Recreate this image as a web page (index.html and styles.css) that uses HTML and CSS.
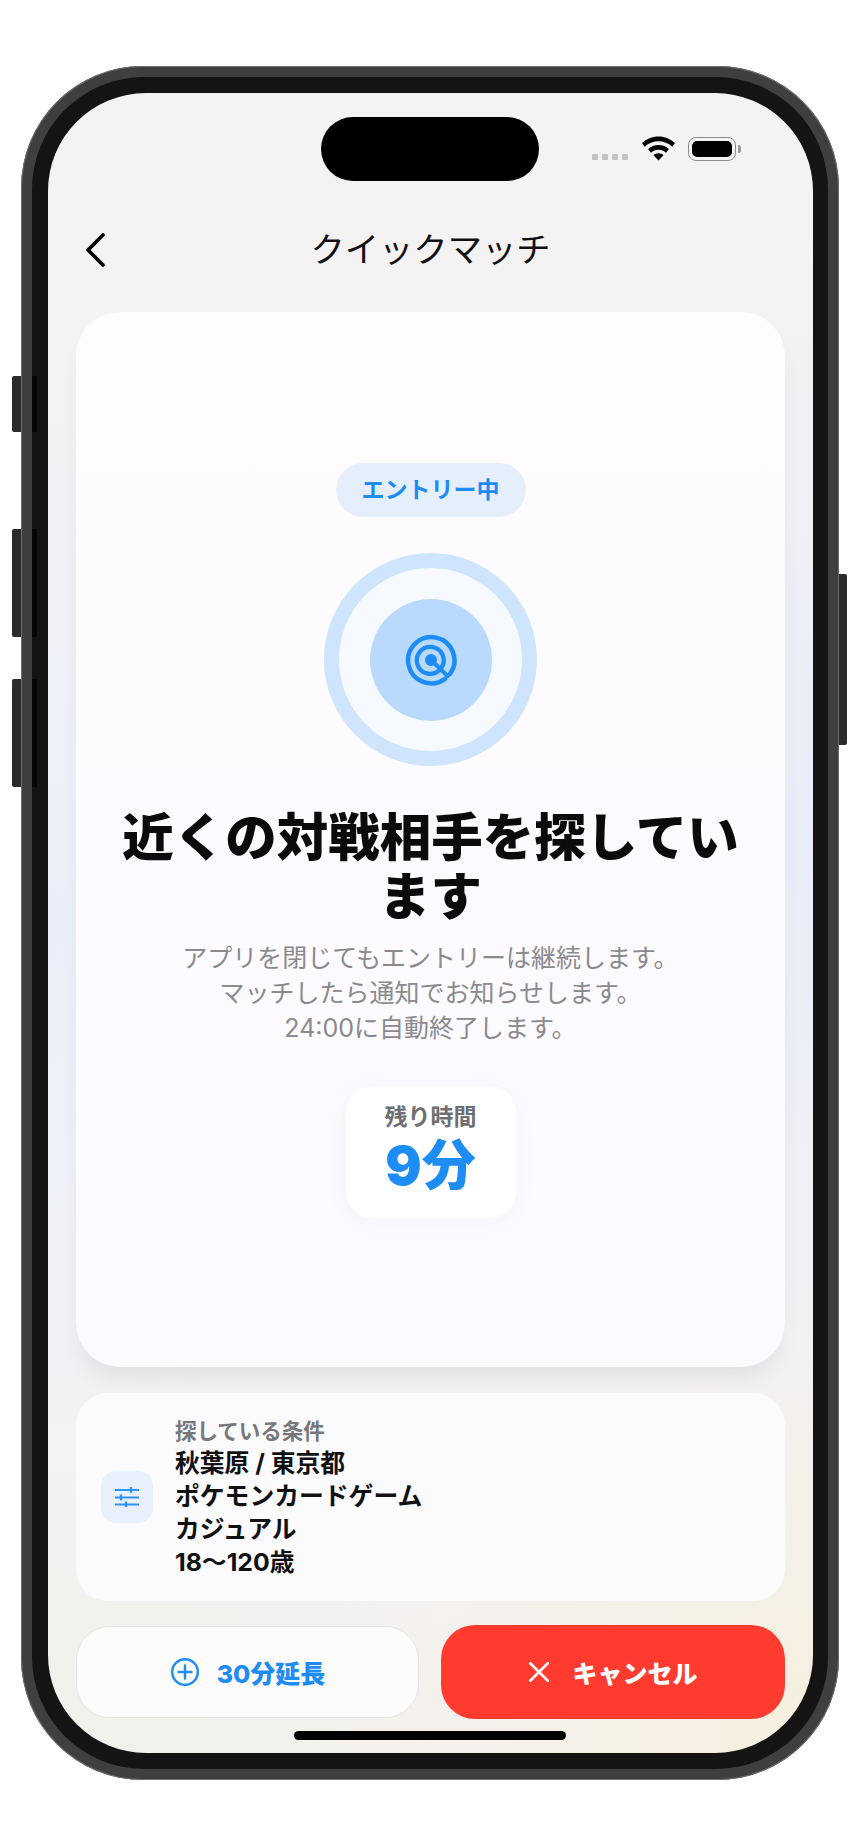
FILE: index.html
```html
<!DOCTYPE html>
<html lang="ja">
<head>
    <meta charset="UTF-8">
    <meta name="viewport" content="width=device-width, initial-scale=1.0">
    <title>クイックマッチ</title>
    <link rel="stylesheet" href="styles.css">
</head>
<body>
    <div class="device">
        <!-- Hardware buttons -->
        <span class="side-btn mute"></span>
        <span class="side-btn vol-up"></span>
        <span class="side-btn vol-down"></span>
        <span class="side-btn power"></span>

        <div class="bezel">
            <div class="screen">
                <div class="status-bar">
                    <div class="island"></div>
                    <div class="signal"><i></i><i></i><i></i><i></i></div>
                    <svg class="wifi" viewBox="0 0 33 24" width="33" height="25">
                        <path d="M16.5 0C10 0 4.6 2.5 0 6.600l2.800 3.600C6.600 6.800 11.200 4.800 16.500 4.800s9.900 2 13.700 5.400L33 6.600C28.400 2.500 23 0 16.500 0z"/>
                        <path d="M16.500 8.600c-4 0-7.500 1.500-10.400 4l2.900 3.600c2-1.800 4.600-2.900 7.500-2.900s5.500 1.100 7.500 2.900l2.900-3.600c-2.900-2.500-6.400-4-10.400-4z"/>
                        <path d="M16.500 16.800c-2 0-3.600.7-5 1.900l5 5.300 5-5.300c-1.400-1.200-3-1.900-5-1.900z"/>
                    </svg>
                    <div class="battery"><div class="battery-level"></div></div>
                </div>

                <div class="nav">
                    <svg class="back" viewBox="0 0 22 36" width="22" height="36">
                        <path d="M19 3L4 18l15 15" fill="none" stroke="#000" stroke-width="3.600" stroke-linecap="round" stroke-linejoin="round"/>
                    </svg>
                    <div class="nav-title">クイックマッチ</div>
                </div>

                <div class="main-card">
                    <div class="badge">エントリー中</div>
                    <div class="pulse">
                        <div class="pulse-core">
                            <svg viewBox="0 0 52 52" width="56" height="56">
                                <g fill="none" stroke="#1e8cf5" stroke-linecap="round">
                                    <path d="M39 43.500A21.500 21.500 0 1 1 43.500 39" stroke-width="4.200"/>
                                    <path d="M33.800 35.500A12.500 12.500 0 1 1 36 32.800" stroke-width="4"/>
                                    <path d="M26 26l15.500 15" stroke-width="3.800"/>
                                </g>
                                <circle cx="26" cy="26" r="5.500" fill="#1e8cf5"/>
                            </svg>
                        </div>
                    </div>
                    <h1>近くの対戦相手を探しています</h1>
                    <p class="desc">アプリを閉じてもエントリーは継続します。<br>マッチしたら通知でお知らせします。<br>24:00に自動終了します。</p>
                    <div class="time-box">
                        <div class="time-label">残り時間</div>
                        <div class="time-value">9分</div>
                    </div>
                </div>

                <div class="cond-card">
                    <div class="cond-icon">
                        <svg viewBox="0 0 24 20" width="24" height="20">
                            <g stroke="#2f93f6" fill="none">
                                <path d="M0 3h24M0 10.500h24M0 17.500h24" stroke-width="2"/>
                                <path d="M16 0v6M6 7.500v6M11 14.500v5.500" stroke-width="2.400"/>
                            </g>
                        </svg>
                    </div>
                    <div class="cond-text">
                        <div class="cond-label">探している条件</div>
                        <div class="cond-line">秋葉原 / 東京都</div>
                        <div class="cond-line">ポケモンカードゲーム</div>
                        <div class="cond-line">カジュアル</div>
                        <div class="cond-line">18〜120歳</div>
                    </div>
                </div>

                <div class="actions">
                    <button class="btn btn-extend">
                        <svg viewBox="0 0 30 30" width="30" height="30">
                            <circle cx="15" cy="15" r="12.800" fill="none" stroke="#1e8cf5" stroke-width="2.400"/>
                            <path d="M15 8.500v13M8.500 15h13" stroke="#1e8cf5" stroke-width="2.400" stroke-linecap="round"/>
                        </svg>
                        30分延長
                    </button>
                    <button class="btn btn-cancel">
                        <svg viewBox="0 0 20 20" width="22" height="22">
                            <path d="M2 2l16 16M18 2L2 18" stroke="#fff" stroke-width="2.400" stroke-linecap="round"/>
                        </svg>
                        キャンセル
                    </button>
                </div>

                <div class="home-bar"></div>
            </div>
        </div>
    </div>
</body>
</html>
```

FILE: styles.css
```css
/* General Styles */
body {
    font-family: Inter, "Noto Sans CJK JP", sans-serif;
    background-color: #ffffff;
    margin: 0;
    padding: 0;
    color: #111113;
}

/* Phone frame */
.device {
    position: relative;
    width: 818px;
    height: 1714px;
    box-sizing: border-box;
    margin: 66px 0 0 21px;
    padding: 11px;
    background-color: #3f3e40;
    border-radius: 122px;
    box-shadow: inset 0 0 0 1px #6d6c6e;
}

.bezel {
    height: 100%;
    box-sizing: border-box;
    padding: 16px 15px 16px 16px;
    background-color: #151314;
    border-radius: 112px;
}

.side-btn {
    position: absolute;
    width: 9px;
    left: -9px;
    background-color: #2b2a2c;
    border-radius: 2px 0 0 2px;
}

/* dark cut in the bezel next to each button */
.side-btn::after {
    content: "";
    position: absolute;
    left: 20px;
    top: 0;
    bottom: 0;
    width: 5px;
    background-color: #050505;
}

.mute { top: 310px; height: 56px; }
.vol-up { top: 463px; height: 108px; }
.vol-down { top: 613px; height: 108px; }

.power {
    left: auto;
    right: -8px;
    width: 8px;
    top: 508px;
    height: 171px;
    border-radius: 0 2px 2px 0;
}

.power::after {
    display: none;
}

.screen {
    height: 100%;
    overflow: hidden;
    border-radius: 98px;
    background-color: #f4f2f3;
    background-image:
        radial-gradient(ellipse 500px 420px at 100% 100%, #f6efdd 0%, rgba(246, 239, 221, 0) 100%),
        radial-gradient(ellipse 460px 300px at 0% 100%, #f1f0e8 0%, rgba(241, 240, 232, 0) 100%),
        radial-gradient(ellipse 240px 600px at 0% 50%, #e9eff9 0%, rgba(233, 239, 249, 0) 100%),
        radial-gradient(ellipse 240px 600px at 100% 45%, #e9edf8 0%, rgba(233, 237, 248, 0) 100%);
}

/* Status bar */
.status-bar {
    display: flex;
    align-items: flex-start;
    height: 64px;
    padding: 24px 0 0 273px;
}

.island {
    width: 218px;
    height: 64px;
    background-color: #000;
    border-radius: 32px;
}

.signal {
    display: flex;
    gap: 4px;
    margin: 37px 0 0 53px;
}

.signal i {
    width: 6px;
    height: 6px;
    border-radius: 1px;
    background-color: #c4c4c6;
}

.wifi {
    margin: 19px 0 0 14px;
}

.battery {
    position: relative;
    width: 48px;
    height: 24px;
    box-sizing: border-box;
    margin: 20px 0 0 13px;
    padding: 3px;
    border: 1px solid #8c8c8e;
    border-radius: 8px;
}

.battery::after {
    content: "";
    position: absolute;
    right: -6px;
    top: 7px;
    width: 3px;
    height: 8px;
    background-color: #9a9a9c;
    border-radius: 0 2px 2px 0;
}

.battery-level {
    height: 100%;
    background-color: #000;
    border-radius: 5px;
}

/* Nav */
.nav {
    display: grid;
    grid-template-columns: 1fr auto 1fr;
    align-items: center;
    height: 124px;
    padding: 7px 0 0 36px;
}

.nav-title {
    font-size: 34.300px;
    line-height: 44px;
    margin-left: -36px;
}

/* Main card */
.main-card {
    display: flex;
    flex-direction: column;
    align-items: center;
    height: 1055px;
    box-sizing: border-box;
    margin: 0 28px;
    padding-top: 151px;
    background-color: #fdfbfe;
    background-image: linear-gradient(180deg, #fffcfe 0%, #fbfaff 100%);
    border-radius: 44px;
    box-shadow: 0 18px 24px -8px rgba(0, 0, 0, 0.08);
}

.badge {
    height: 54px;
    padding: 0 26px;
    font-size: 23px;
    font-weight: 700;
    line-height: 55px;
    color: #1e8cf5;
    background-color: #e5effc;
    border-radius: 27px;
}

.pulse {
    display: flex;
    align-items: center;
    justify-content: center;
    width: 213px;
    height: 213px;
    box-sizing: border-box;
    margin-top: 36px;
    border: 15px solid #cfe4fd;
    border-radius: 50%;
    background-color: #f6faff;
}

.pulse-core {
    display: flex;
    align-items: center;
    justify-content: center;
    width: 122px;
    height: 122px;
    border-radius: 50%;
    background-color: #b9dafc;
}

h1 {
    width: 630px;
    margin: 42px 0 0;
    font-size: 51.500px;
    font-weight: 900;
    line-height: 59px;
    text-align: center;
    color: #0b0b0d;
}

.desc {
    margin: 15px 0 0;
    font-size: 25px;
    line-height: 35px;
    text-align: center;
    color: #8a8a8e;
}

.time-box {
    display: flex;
    flex-direction: column;
    align-items: center;
    width: 170px;
    height: 132px;
    box-sizing: border-box;
    margin-top: 40px;
    padding-top: 16px;
    background-color: #ffffff;
    border-radius: 26px;
    box-shadow: 0 2px 22px rgba(90, 100, 140, 0.05);
}

.time-label {
    font-size: 23px;
    font-weight: 700;
    line-height: 30px;
    color: #6e6e73;
}

.time-value {
    margin-top: 3px;
    font-size: 54px;
    font-weight: 900;
    line-height: 62px;
    color: #1e8cf5;
}

/* Conditions */
.cond-card {
    display: flex;
    align-items: center;
    gap: 22px;
    height: 208px;
    box-sizing: border-box;
    margin: 26px 28px 0;
    padding-left: 25px;
    background-color: #fbfbfd;
    background-image: linear-gradient(100deg, #fbfbfe 0%, #fcfbfb 100%);
    border-radius: 32px;
}

.cond-icon {
    display: flex;
    align-items: center;
    justify-content: center;
    width: 52px;
    height: 52px;
    background-color: #e8f0fb;
    border-radius: 15px;
}

.cond-label {
    font-size: 21.500px;
    font-weight: 700;
    line-height: 32px;
    color: #77777c;
}

.cond-line {
    font-size: 24.800px;
    font-weight: 700;
    line-height: 33px;
    color: #111113;
}

/* Buttons */
.actions {
    display: grid;
    grid-template-columns: 343px 344px;
    gap: 22px;
    align-items: center;
    margin: 24px 28px 0;
}

.btn {
    display: flex;
    align-items: center;
    justify-content: center;
    font-family: inherit;
    font-size: 25px;
    font-weight: 800;
    border-radius: 34px;
}

.btn-extend {
    gap: 17px;
    height: 92px;
    color: #1e8cf5;
    background-color: #fdfcfb;
    border: 1px solid #e5e5e5;
}

.btn-cancel {
    gap: 22px;
    height: 94px;
    color: #ffffff;
    background-color: #ff3b30;
    border: none;
}

.home-bar {
    width: 272px;
    height: 9px;
    margin: 12px 0 0 246px;
    background-color: #000;
    border-radius: 5px;
}
```
